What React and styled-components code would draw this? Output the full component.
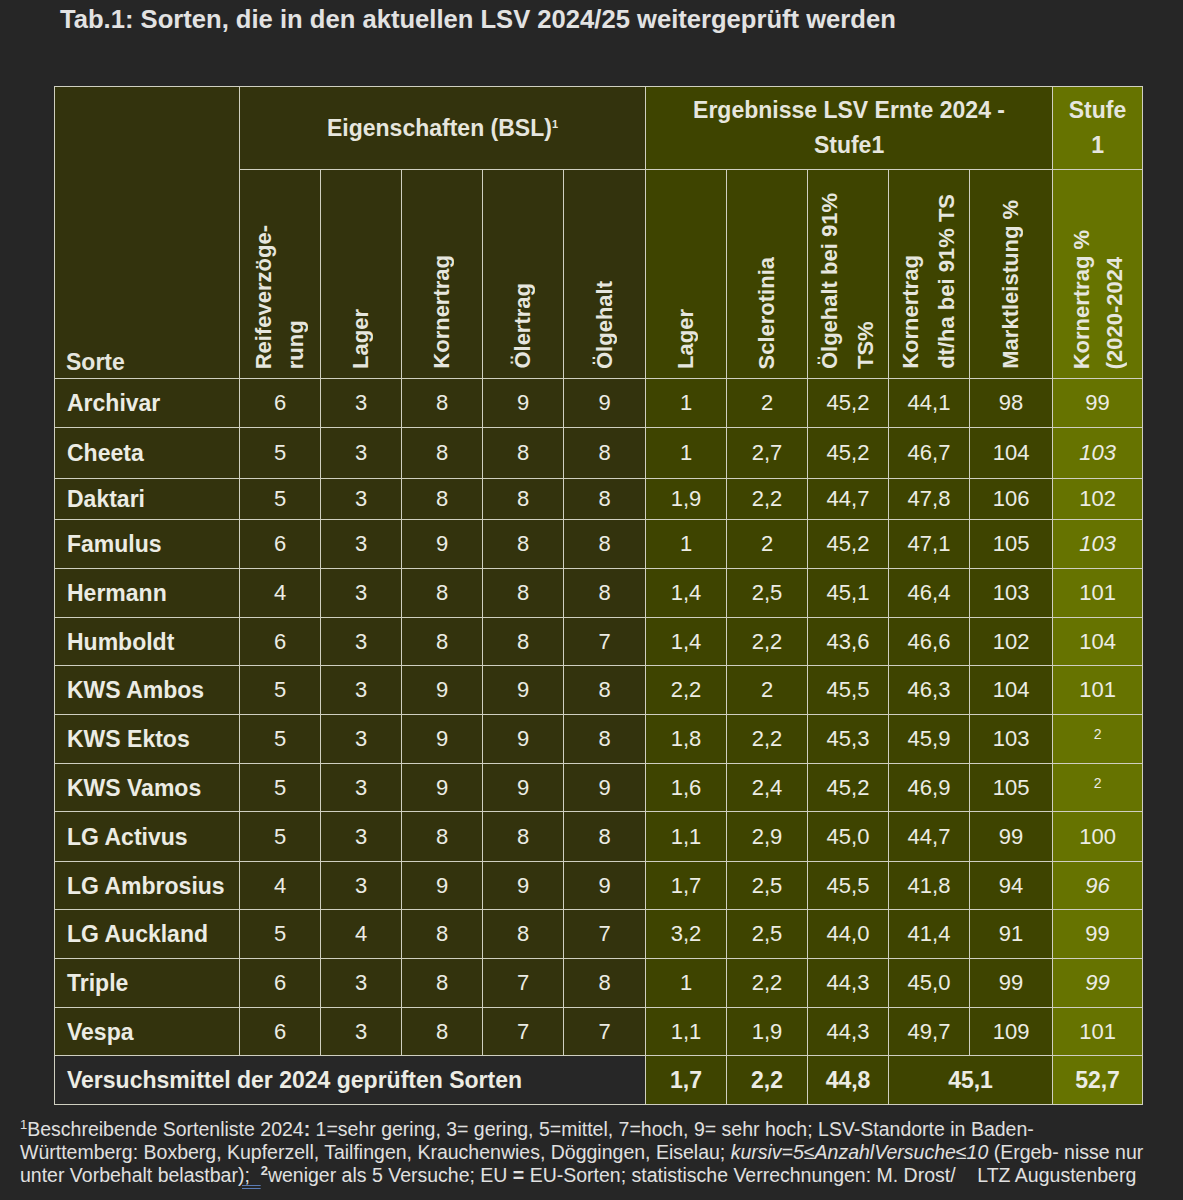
import * as React from "react";
import styled, { createGlobalStyle } from "styled-components";

const GlobalStyle = createGlobalStyle`
    body {
        margin: 0;
        background: #262626;
        font-family: "Liberation Sans", Arial, sans-serif;
        color: #e6e6de;
    }
`;

const Page = styled.div`
    width: 1183px;
    height: 1200px;
    overflow: hidden;
`;

const Title = styled.h1`
    margin: 0;
    padding: 5px 0 0 60px;
    font-size: 25.6px;
    line-height: 29px;
    font-weight: bold;
    color: #e2e2e2;
`;

const Table = styled.table`
    margin: 52px 0 0 54px;
    border-collapse: collapse;
    table-layout: fixed;
    width: 1088px;
    border: 1px solid #d2d2c4;
`;

const bg = {
    a: "#33330d",
    b: "#3e4400",
    c: "#667300",
    m: "#272727",
};

const Th = styled.th`
    background: ${p => bg[p.$tone]};
    border: 1px solid #cfcfc0;
    font-size: ${p => (p.$small ? 22 : 23)}px;
    font-weight: bold;
    color: #e6e6de;
    padding: 0;
    text-align: ${p => (p.$left ? "left" : "center")};
    vertical-align: ${p => (p.$bottom ? "bottom" : "middle")};
    line-height: ${p => (p.$lh ? p.$lh : "26px")};
`;

const SorteLabel = styled.div`
    padding: 0 0 3px 11px;
`;

const VText = styled.span`
    display: inline-block;
    writing-mode: vertical-rl;
    transform: rotate(180deg);
    text-align: start;
    line-height: ${p => p.$lh || 34}px;
    white-space: nowrap;
    margin-bottom: 3px;
`;

const Sup = styled.sup`
    font-size: 11px;
    vertical-align: 8px;
    line-height: 0;
`;

const Row = styled.tr`
    height: ${p => p.$h}px;
`;

const Td = styled.td`
    background: ${p => bg[p.$tone]};
    border: 1px solid #cfcfc0;
    font-size: ${p => (p.$bold ? 23 : 22)}px;
    line-height: 24px;
    padding: 0;
    text-align: center;
    vertical-align: middle;
    color: #ecece4;
    font-style: ${p => (p.$italic ? "italic" : "normal")};
    font-weight: ${p => (p.$bold ? "bold" : "normal")};
`;

const NameTd = styled(Td)`
    text-align: left;
    font-weight: bold;
    font-size: 23px;
    padding-left: 12px;
`;

const SmallSup = styled.span`
    font-size: 14px;
    position: relative;
    top: -6px;
`;

const Foot = styled.p`
    margin: 13px 0 0 20px;
    width: 1160px;
    font-size: 19.5px;
    line-height: 23px;
    color: #e0e0e0;
    white-space: pre;
`;

const FootSup = styled.span`
    font-size: 13px;
    vertical-align: 7px;
    line-height: 0;
    font-weight: ${p => (p.$bold ? "bold" : "normal")};
`;

const Mark = styled.span`
    text-decoration: underline double #5a7bb5;
    text-underline-offset: 3px;
`;

const widths = [185, 81, 81, 81, 81, 82, 81, 81, 81, 81, 83, 90];
const tones = ["a", "a", "a", "a", "a", "a", "b", "b", "b", "b", "b", "c"];

const it = v => ({ v, italic: true });
const sup = v => ({ v, sup: true });

const rows = [
    [49, "Archivar", "6", "3", "8", "9", "9", "1", "2", "45,2", "44,1", "98", "99"],
    [51, "Cheeta", "5", "3", "8", "8", "8", "1", "2,7", "45,2", "46,7", "104", it("103")],
    [41, "Daktari", "5", "3", "8", "8", "8", "1,9", "2,2", "44,7", "47,8", "106", "102"],
    [49, "Famulus", "6", "3", "9", "8", "8", "1", "2", "45,2", "47,1", "105", it("103")],
    [49, "Hermann", "4", "3", "8", "8", "8", "1,4", "2,5", "45,1", "46,4", "103", "101"],
    [48, "Humboldt", "6", "3", "8", "8", "7", "1,4", "2,2", "43,6", "46,6", "102", "104"],
    [49, "KWS Ambos", "5", "3", "9", "9", "8", "2,2", "2", "45,5", "46,3", "104", "101"],
    [49, "KWS Ektos", "5", "3", "9", "9", "8", "1,8", "2,2", "45,3", "45,9", "103", sup("2")],
    [48, "KWS Vamos", "5", "3", "9", "9", "9", "1,6", "2,4", "45,2", "46,9", "105", sup("2")],
    [50, "LG Activus", "5", "3", "8", "8", "8", "1,1", "2,9", "45,0", "44,7", "99", "100"],
    [48, "LG Ambrosius", "4", "3", "9", "9", "9", "1,7", "2,5", "45,5", "41,8", "94", it("96")],
    [49, "LG Auckland", "5", "4", "8", "8", "7", "3,2", "2,5", "44,0", "41,4", "91", "99"],
    [49, "Triple", "6", "3", "8", "7", "8", "1", "2,2", "44,3", "45,0", "99", it("99")],
    [48, "Vespa", "6", "3", "8", "7", "7", "1,1", "1,9", "44,3", "49,7", "109", "101"],
];

const subHeads = [
    { tone: "a", lines: ["Reifeverzöge-", "rung"], lh: 32 },
    { tone: "a", lines: ["Lager"] },
    { tone: "a", lines: ["Kornertrag"] },
    { tone: "a", lines: ["Ölertrag"] },
    { tone: "a", lines: ["Ölgehalt"] },
    { tone: "b", lines: ["Lager"] },
    { tone: "b", lines: ["Sclerotinia"] },
    { tone: "b", lines: ["Ölgehalt bei 91%", "TS%"], lh: 36 },
    { tone: "b", lines: ["Kornertrag", "dt/ha bei 91% TS"], lh: 36 },
    { tone: "b", lines: ["Marktleistung %"] },
    { tone: "c", lines: ["Kornertrag %", "(2020-2024"], lh: 33 },
];

const Cell = ({ value, tone }) => {
    if (typeof value === "object") {
        return (
            <Td $tone={tone} $italic={value.italic}>
                {value.sup ? <SmallSup>{value.v}</SmallSup> : value.v}
            </Td>
        );
    }
    return <Td $tone={tone}>{value}</Td>;
};

export default function App() {
    return (
        <Page>
            <GlobalStyle />
            <Title>Tab.1: Sorten, die in den aktuellen LSV 2024/25 weitergeprüft werden</Title>
            <Table>
                <colgroup>
                    {widths.map((w, i) => <col key={i} style={{ width: w }} />)}
                </colgroup>
                <thead>
                    <Row $h={83}>
                        <Th $tone="a" rowSpan={2} $left $bottom>
                            <SorteLabel>Sorte</SorteLabel>
                        </Th>
                        <Th $tone="a" colSpan={5}>
                            Eigenschaften (BSL)<Sup>1</Sup>
                        </Th>
                        <Th $tone="b" colSpan={5} $lh="35px">
                            Ergebnisse LSV Ernte 2024 -<br />Stufe1
                        </Th>
                        <Th $tone="c" $lh="35px">
                            Stufe<br />1
                        </Th>
                    </Row>
                    <Row $h={209}>
                        {subHeads.map((h, i) => (
                            <Th key={i} $tone={h.tone} $bottom $small>
                                <VText $lh={h.lh}>
                                    {h.lines.map((l, j) => (
                                        <React.Fragment key={j}>
                                            {j > 0 && <br />}
                                            {l}
                                        </React.Fragment>
                                    ))}
                                </VText>
                            </Th>
                        ))}
                    </Row>
                </thead>
                <tbody>
                    {rows.map(([h, name, ...vals]) => (
                        <Row key={name} $h={h}>
                            <NameTd $tone="a">{name}</NameTd>
                            {vals.map((v, i) => (
                                <Cell key={i} value={v} tone={tones[i + 1]} />
                            ))}
                        </Row>
                    ))}
                    <Row $h={49}>
                        <NameTd $tone="m" colSpan={6}>Versuchsmittel der 2024 geprüften Sorten</NameTd>
                        <Td $tone="b" $bold>1,7</Td>
                        <Td $tone="b" $bold>2,2</Td>
                        <Td $tone="b" $bold>44,8</Td>
                        <Td $tone="b" $bold colSpan={2}>45,1</Td>
                        <Td $tone="c" $bold>52,7</Td>
                    </Row>
                </tbody>
            </Table>
            <Foot>
                <FootSup>1</FootSup>Beschreibende Sortenliste 2024<b>:</b> 1=sehr gering, 3= gering, 5=mittel, 7=hoch, 9= sehr hoch; LSV-Standorte in Baden-
                <br />
                Württemberg: Boxberg, Kupferzell, Tailfingen, Krauchenwies, Döggingen, Eiselau; <i>kursiv=5≤AnzahlVersuche≤10</i> (Ergeb- nisse nur
                <br />
                unter Vorbehalt belastbar<Mark>);  </Mark><FootSup $bold>2</FootSup>weniger als 5 Versuche; EU <b>=</b> EU-Sorten; statistische Verrechnungen: M. Drost/    LTZ Augustenberg
            </Foot>
        </Page>
    );
}
